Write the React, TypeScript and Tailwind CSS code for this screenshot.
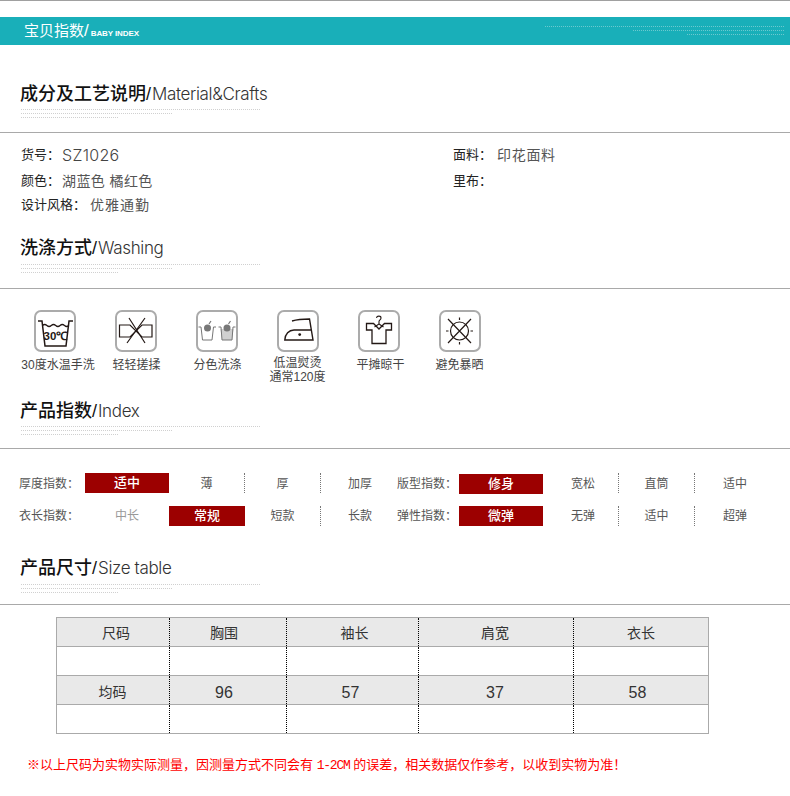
import type { ReactNode } from 'react'

const cjk = 'font-["Liberation_Sans","Noto_Sans_CJK_SC",sans-serif]'

const icons: { label: string[]; labelClass: string; svg: ReactNode }[] = [
  {
    label: ['30度水温手洗'],
    labelClass: 'mt-[6px] ml-[7px]',
    svg: (
      <>
        <path d="M4 11H8L11 36H32L35 11H39" fill="none" stroke="#231815" strokeWidth="1.5" />
        <path d="M8.5 15.5q2.2-2 4.4 0t4.4 0t4.4 0t4.4 0t4.4 0t4.4 0" fill="none" stroke="#231815" strokeWidth="1.2" />
        <text x="21.5" y="30" textAnchor="middle" fontSize="11.5" fontWeight="700" fontFamily="Liberation Sans" fill="#231815">30℃</text>
      </>
    ),
  },
  {
    label: ['轻轻搓揉'],
    labelClass: 'mt-[6px] ml-[2px]',
    svg: (
      <>
        <path d="M4.5 15H15L27 27H37V15H27L15 27H4.5Z" fill="none" stroke="#231815" strokeWidth="1.2" />
        <path d="M14 8L30 33M30 8L12 33" stroke="#231815" strokeWidth="1.2" />
      </>
    ),
  },
  {
    label: ['分色洗涤'],
    labelClass: 'mt-[6px] ml-[2px]',
    svg: (
      <>
        <path d="M5 19L6.5 30H16L17.5 19Z" fill="#fff" />
        <path d="M2.5 17H5L6.5 30H16L17.5 17H20" fill="none" stroke="#777" strokeWidth="1" />
        <path d="M24.5 19L26 30H36L37.5 19Z" fill="#d0d0d0" />
        <path d="M22.5 17H25L26 30H36L37 17H39.5" fill="none" stroke="#777" strokeWidth="1" />
        <circle cx="11.5" cy="18" r="3.5" fill="#777" />
        <circle cx="31" cy="18" r="3.5" fill="#777" />
        <path d="M13 14l2-3M32.5 14l2-3" stroke="#777" strokeWidth="1.2" />
      </>
    ),
  },
  {
    label: ['低温熨烫', '通常120度'],
    labelClass: 'mt-[4px]',
    svg: (
      <>
        <path d="M15 11C20 9.5 27 9 32.5 9L36 30H7.8C8 24 12 20 17 20H34" fill="none" stroke="#231815" strokeWidth="1.4" />
        <circle cx="22.7" cy="24.6" r="1.4" fill="#231815" />
      </>
    ),
  },
  {
    label: ['平摊晾干'],
    labelClass: 'mt-[6px] ml-[4px]',
    svg: (
      <>
        <path d="M8.5 13.5H15.5L21 19L26.5 13.5H33.5V20H28V33.5H14V20H8.5Z" fill="none" stroke="#231815" strokeWidth="1.3" />
        <path d="M18.5 8C18.8 5.5 23 5.5 23 8C23 9.8 21 9.8 21 11.5V14L16.5 17M21 14L25.5 17" fill="none" stroke="#231815" strokeWidth="1.1" />
      </>
    ),
  },
  {
    label: ['避免暴晒'],
    labelClass: 'mt-[6px]',
    svg: (
      <>
        <circle cx="20.5" cy="21" r="9" fill="none" stroke="#231815" strokeWidth="1.2" />
        <path d="M9 9L32 33M32 9L9 33M20.5 7.5V10M20.5 32V34.5M7 21H9.5M31.5 21H34" stroke="#231815" strokeWidth="1.2" />
      </>
    ),
  },
]

const indexRows = [
  [
    { text: '厚度指数：', kind: 'labelLow' },
    { text: '适中', kind: 'on' },
    { text: '薄', kind: 'dashLow' },
    { text: '厚', kind: 'dashLow' },
    { text: '加厚', kind: 'offLow' },
    { text: '版型指数：', kind: 'labelLow' },
    { text: '修身', kind: 'onLow' },
    { text: '宽松', kind: 'dashWideLow' },
    { text: '直筒', kind: 'dashLow' },
    { text: '适中', kind: 'offLow' },
  ],
  [
    { text: '衣长指数：', kind: 'label' },
    { text: '中长', kind: 'faint' },
    { text: '常规', kind: 'on' },
    { text: '短款', kind: 'dash' },
    { text: '长款', kind: 'off' },
    { text: '弹性指数：', kind: 'label' },
    { text: '微弹', kind: 'on' },
    { text: '无弹', kind: 'dashWide' },
    { text: '适中', kind: 'dash' },
    { text: '超弹', kind: 'off' },
  ],
]

const cellStyles: Record<string, string> = {
  label: 'text-[#555] text-[12px] leading-[20px]',
  labelLow: 'text-[#555] text-[12px] leading-[22px]',
  on: 'bg-[#9c0000] text-white text-center text-[13px] font-medium leading-[20px]',
  onLow: 'bg-[#9c0000] text-white text-center text-[13px] font-medium leading-[20px] translate-y-px',
  off: 'text-[#555] text-center text-[12px] pl-[2px] leading-[20px]',
  offLow: 'text-[#555] text-center text-[12px] pl-[2px] leading-[22px]',
  faint: 'text-[#999] text-center text-[12px] leading-[20px]',
  dash: 'text-[#555] text-center text-[12px] leading-[20px] border-r border-dotted border-[#777]',
  dashLow: 'text-[#555] text-center text-[12px] leading-[22px] border-r border-dotted border-[#777]',
  dashWide: 'text-[#555] text-center text-[12px] pl-[5px] leading-[20px] border-r border-dotted border-[#777]',
  dashWideLow: 'text-[#555] text-center text-[12px] pl-[5px] leading-[22px] border-r border-dotted border-[#777]',
}

const sizeRows = [
  ['尺码', '胸围', '袖长', '肩宽', '衣长'],
  ['', '', '', '', ''],
  ['均码', '96', '57', '37', '58'],
  ['', '', '', '', ''],
]

const headPads = ['pl-[6px] pt-[2px]', 'pr-[8px] pt-[2px]', 'pl-[4px] pt-[2px]', 'pr-[2px] pt-[2px]', 'pt-[2px]']
const valuePads = ['pr-[1px] pt-[4px]', 'pr-[8px] pt-[6px]', 'pr-[4px] pt-[6px]', 'pr-[2px] pt-[6px]', 'pr-[7px] pt-[6px]']

function Dots({ widths, color }: { widths: string[]; color: string }) {
  return (
    <div className="flex flex-col gap-[3px]">
      {widths.map((w) => (
        <div key={w} className={`h-px ${w} ${color}`} />
      ))}
    </div>
  )
}

function Header({ zh, en, top, gap, bottom }: { zh: string; en: string; top: string; gap: string; bottom: string }) {
  return (
    <div className={`${top} ${bottom} pl-[20px] border-b border-[#a9a9a9]`}>
      <div className="h-[24px] leading-[24px] flex items-baseline text-[#111]">
        <span className="text-[18px] font-medium">{zh}</span>
        <span className="text-[18px] pr-px">/</span>
        <span className="text-[17px] font-['Inter'] font-light tracking-[-0.35px] text-[#333]">{en}</span>
      </div>
      <div className={`${gap} pl-px`}>
        <Dots
          widths={['w-[240px]', 'w-[151px]', 'w-[98px]']}
          color="bg-[repeating-linear-gradient(90deg,#d0d0d0_0,#d0d0d0_1px,transparent_1px,transparent_2px)]"
        />
      </div>
    </div>
  )
}

export default function App() {
  return (
    <div className={`w-[790px] h-[796px] overflow-hidden bg-white ${cjk}`}>
      <div className="h-px bg-[#a0a0a0]" />

      {/* Banner */}
      <div className="mt-[16px] h-[28px] bg-[#19afb9] pl-[24px] pr-[5px] flex items-center justify-between text-white">
        <div className="flex items-baseline">
          <span className="text-[15px]">宝贝指数</span>
          <span className="text-[17px] pr-[2px]">/</span>
          <span className="text-[8px] font-bold tracking-[-0.1px]">BABY INDEX</span>
        </div>
        <div className="flex flex-col items-end gap-[3px] -mt-[2px]">
          {['w-[240px]', 'w-[152px]', 'w-[98px]'].map((w) => (
            <div
              key={w}
              className={`h-px ${w} bg-[repeating-linear-gradient(90deg,#6cc9cf_0,#6cc9cf_1px,transparent_1px,transparent_2px)]`}
            />
          ))}
        </div>
      </div>

      <Header zh="成分及工艺说明" en="Material&Crafts" top="pt-[37px]" gap="mt-[3px]" bottom="pb-[14px]" />

      {/* Details */}
      <div className="pt-[9px] pl-[21px] h-[103px] flex">
        <div className="w-[432px] text-[#333]">
          <div className="h-[26px] flex items-center">
            <span className="w-[41px] text-[13px] text-[#222]">货号：</span>
            <span className="text-[16px] font-['Inter'] font-light text-[#444] tracking-[0.3px]">SZ1026</span>
          </div>
          <div className="h-[26px] flex items-center">
            <span className="w-[41px] text-[13px] text-[#222]">颜色：</span>
            <span className="text-[14px] text-[#555] tracking-[0.4px]">湖蓝色 橘红色</span>
          </div>
          <div className="h-[22px] flex items-center">
            <span className="w-[69px] text-[13px] text-[#222]">设计风格：</span>
            <span className="text-[14px] text-[#555] tracking-[1px]">优雅通勤</span>
          </div>
        </div>
        <div>
          <div className="h-[26px] flex items-center">
            <span className="w-[44px] text-[13px] text-[#222]">面料：</span>
            <span className="text-[14px] text-[#555] tracking-[0.7px]">印花面料</span>
          </div>
          <div className="h-[26px] flex items-center">
            <span className="text-[13px] text-[#222]">里布：</span>
          </div>
        </div>
      </div>

      <Header zh="洗涤方式" en="Washing" top="pt-0" gap="mt-[4px]" bottom="pb-[15px]" />

      {/* Care icons */}
      <div className="h-[110px] pt-[21px] pl-[14px] flex">
        {icons.map((icon) => (
          <div key={icon.label[0]} className="w-[81px] flex flex-col items-center">
            <svg width="42" height="42" viewBox="0 0 42 42">
              <rect x="1" y="1" width="40" height="40" rx="6" fill="#fff" stroke="#ababab" strokeWidth="2" />
              {icon.svg}
            </svg>
            <div className={`${icon.labelClass} text-[12px] leading-[14px] text-[#444] text-center whitespace-nowrap`}>
              {icon.label.map((l) => (
                <div key={l}>{l}</div>
              ))}
            </div>
          </div>
        ))}
      </div>

      <Header zh="产品指数" en="Index" top="pt-0" gap="mt-[3px]" bottom="pb-[13px]" />

      {/* Index table */}
      <div className="pt-[24px] pl-[19px] h-[107px]">
        <div className="grid grid-cols-[66px_84px_76px_76px_76px_62px_84px_76px_76px_78px] gap-y-[13px]">
          {indexRows.flat().map((cell, i) => (
            <div key={i} className={`h-[20px] whitespace-nowrap ${cellStyles[cell.kind]}`}>
              {cell.text}
            </div>
          ))}
        </div>
      </div>

      <Header zh="产品尺寸" en="Size table" top="pt-0" gap="mt-[4px]" bottom="pb-[11px]" />

      {/* Size table */}
      <table className="mt-[12px] ml-[56px] w-[652px] table-fixed border-collapse border border-[#aaa]">
        <colgroup>
          <col className="w-[113px]" />
          <col className="w-[117px]" />
          <col className="w-[132px]" />
          <col className="w-[155px]" />
          <col className="w-[135px]" />
        </colgroup>
        <tbody>
          {sizeRows.map((row, r) => (
            <tr key={r} className={`h-[29px] border-b border-[#aaa] ${r % 2 === 0 ? 'bg-[#e9e9e9]' : 'bg-white'}`}>
              {row.map((cell, c) => (
                <td
                  key={c}
                  className={`p-0 text-center text-[#333] leading-[20px] ${r === 2 && c > 0 ? 'text-[16px]' : 'text-[14px]'} ${r === 0 ? headPads[c] : ''} ${r === 2 ? valuePads[c] : ''} ${c < 4 ? 'border-r border-dotted border-black' : ''}`}
                >
                  {cell}
                </td>
              ))}
            </tr>
          ))}
        </tbody>
      </table>

      <div className="mt-[21px] pl-[27px] h-[20px] leading-[20px] text-[13px] text-[#f00] whitespace-nowrap">
        ※以上尺码为实物实际测量，因测量方式不同会有 <span className="font-['Liberation_Mono'] tracking-[-1.2px]">1-2CM</span> 的误差，相关数据仅作参考，以收到实物为准！
      </div>
    </div>
  )
}
